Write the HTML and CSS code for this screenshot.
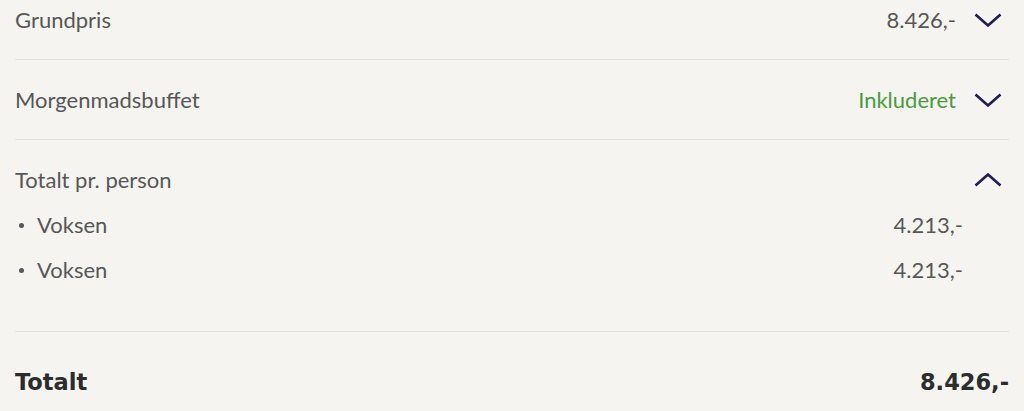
FILE: index.html
```html
<!DOCTYPE html>
<html lang="da">
<head>
  <meta charset="UTF-8">
  <title>Pris</title>
  <link rel="stylesheet" href="styles.css">
</head>
<body>

<div class="price-list">
  <div class="price-row">
    <span class="label">Grundpris</span>
    <span class="value">8.426,-</span>
    <svg class="chevron" viewBox="0 0 28 14"><path d="M1.5 1.5 L14 12.5 L26.5 1.5"/></svg>
  </div>

  <div class="price-row">
    <span class="label">Morgenmadsbuffet</span>
    <span class="value included">Inkluderet</span>
    <svg class="chevron" viewBox="0 0 28 14"><path d="M1.5 1.5 L14 12.5 L26.5 1.5"/></svg>
  </div>

  <div class="price-group">
    <div class="group-head">
      <span class="label">Totalt pr. person</span>
      <svg class="chevron" viewBox="0 0 28 14"><path d="M1.5 12.5 L14 1.5 L26.5 12.5"/></svg>
    </div>
    <ul class="persons">
      <li><span class="label">Voksen</span><span class="value">4.213,-</span></li>
      <li><span class="label">Voksen</span><span class="value">4.213,-</span></li>
    </ul>
  </div>

  <div class="total-row">
    <span>Totalt</span>
    <span>8.426,-</span>
  </div>
</div>

</body>
</html>
```

FILE: styles.css
```css
html, body {
  margin: 0;
  padding: 0;
  height: 100%;
  overflow: hidden;
  background: #f5f4f1;
  font-family: Lato, "Open Sans", sans-serif;
  color: #575757;
}

.price-list {
  margin: -20px 15px 0 15px;
}

.price-row {
  display: flex;
  align-items: center;
  height: 79px;
  border-bottom: 1px solid #e4e2de;
  font-size: 22px;
  line-height: 24px;
}

.label {
  flex: 1;
}

.price-row .value {
  margin-right: 18px;
}

.value.included {
  color: #4a9b3e;
}

.chevron {
  width: 28px;
  height: 14px;
  margin-right: 7px;
  fill: none;
  stroke: #1f1b5c;
  stroke-width: 2.6;
}

.price-group {
  border-bottom: 1px solid #e4e2de;
  padding-bottom: 39px;
  font-size: 22px;
  line-height: 24px;
}

.group-head {
  display: flex;
  align-items: center;
  padding: 28px 0 10px 0;
}

.persons {
  list-style: none;
  margin: 0;
  padding: 0;
}

.persons li {
  display: flex;
  height: 45px;
  align-items: center;
}

.persons li::before {
  content: "";
  width: 5px;
  height: 5px;
  border-radius: 50%;
  background: #575757;
  margin: 2px 13px 0 4px;
}

.persons .value {
  margin-right: 46px;
}

.total-row {
  display: flex;
  justify-content: space-between;
  padding-top: 38px;
  font-family: "DejaVu Sans", sans-serif;
  font-size: 22.5px;
  line-height: 24px;
  font-weight: bold;
  color: #2c2c2c;
}
```
